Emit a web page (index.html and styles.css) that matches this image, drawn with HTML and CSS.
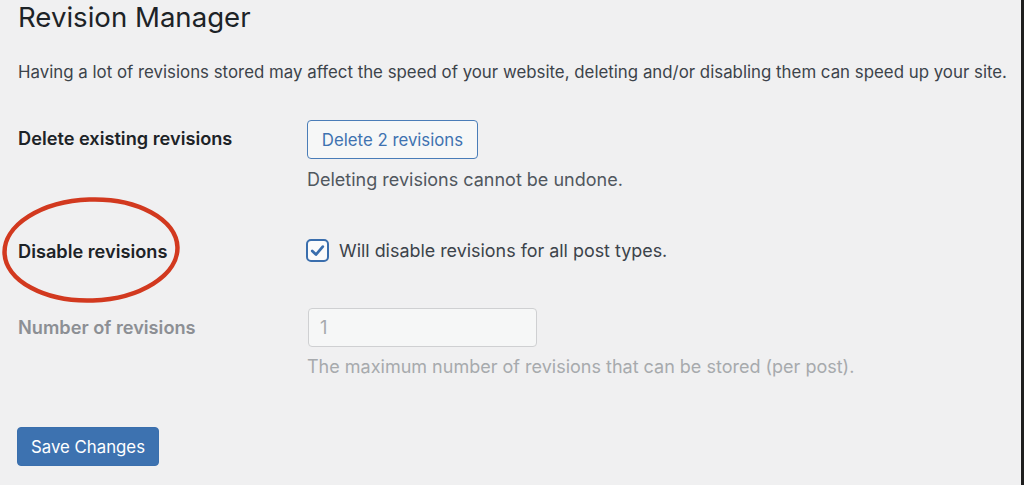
FILE: index.html
```html
<!DOCTYPE html>
<html>
<head>
<meta charset="utf-8">
<link rel="stylesheet" href="styles.css">
</head>
<body>
<div class="page">
  <h1 class="title">Revision Manager</h1>
  <p class="intro">Having a lot of revisions stored may affect the speed of your website, deleting and/or disabling them can speed up your site.</p>
  <div class="form">
    <div class="row row-delete">
      <div class="label">Delete existing revisions</div>
      <div class="field">
        <button class="btn-secondary">Delete 2 revisions</button>
        <p class="desc">Deleting revisions cannot be undone.</p>
      </div>
    </div>
    <div class="row row-disable">
      <div class="label label-circled">Disable revisions
        <svg class="circle" width="184" height="112" viewBox="0 0 184 112"><ellipse cx="92" cy="56" rx="86.5" ry="50.5" fill="none" stroke="#d2391f" stroke-width="4.5" transform="rotate(-2 92 56)"/></svg>
      </div>
      <div class="field check-field">
        <span class="checkbox"><svg width="17" height="17" viewBox="0 0 20 20"><path d="M3.8 10.6 L8.2 14.8 L16.2 5.4" fill="none" stroke="#3a6ead" stroke-width="3.2" stroke-linecap="round" stroke-linejoin="round"/></svg></span>
        <span class="check-label">Will disable revisions for all post types.</span>
      </div>
    </div>
    <div class="row row-number">
      <div class="label label-muted">Number of revisions</div>
      <div class="field">
        <div class="input">1</div>
        <p class="desc desc-muted">The maximum number of revisions that can be stored (per post).</p>
      </div>
    </div>
  </div>
  <button class="btn-primary">Save Changes</button>
</div>
</body>
</html>
```
FILE: styles.css
```css
html, body {
  margin: 0;
  padding: 0;
}
body {
  background: #f0f0f1;
  font-family: Inter, "Liberation Sans", sans-serif;
  color: #3c434a;
  width: 1024px;
  height: 485px;
  overflow: hidden;
  position: relative;
  box-sizing: border-box;
  border-right: 3px solid #1e1e1e;
}
.page {
  padding: 0 0 0 18px;
}
.title {
  margin: 0;
  font-size: 27.6px;
  font-weight: 400;
  color: #1d2327;
  line-height: 34px;
}
.intro {
  margin: 25px 0 0;
  font-size: 16.85px;
  line-height: 26px;
  color: #3c434a;
  white-space: nowrap;
}
.form {
  margin-top: 35px;
}
.row {
  display: grid;
  grid-template-columns: 289px 1fr;
}
.label {
  font-weight: 600;
  font-size: 18.2px;
  color: #1d2327;
  line-height: 26px;
}
.label-circled {
  position: relative;
}
.circle {
  position: absolute;
  left: -19px;
  top: -43.5px;
}
.label-muted {
  color: #8c8f94;
}
.row-delete .label {
  padding-top: 5px;
}
.btn-secondary {
  display: block;
  box-sizing: border-box;
  width: 171px;
  height: 39px;
  border: 1.5px solid #4a7db8;
  border-radius: 4px;
  background: #f6f7f7;
  color: #3e72b0;
  font-family: inherit;
  font-size: 16.8px;
  padding: 0;
  margin: 0;
}
.desc {
  margin: 8px 0 0;
  font-size: 18px;
  line-height: 26px;
  color: #50575e;
}
.desc-muted {
  color: #a7aaad;
  margin-top: 6.5px;
}
.row-disable {
  margin-top: 44.5px;
  align-items: center;
}
.check-field {
  display: flex;
  align-items: center;
  gap: 10px;
}
.checkbox {
  box-sizing: border-box;
  width: 23px;
  height: 23px;
  border: 2.5px solid #3a6ead;
  border-radius: 5px;
  background: #fbfbfb;
  display: flex;
  align-items: center;
  justify-content: center;
  margin-left: -1px;
}
.check-label {
  font-size: 17.9px;
  line-height: 26px;
  color: #3c434a;
}
.row-number {
  margin-top: 44.5px;
}
.row-number .label {
  padding-top: 5.5px;
}
.input {
  box-sizing: border-box;
  width: 229px;
  height: 39px;
  margin-left: 1px;
  border: 1.5px solid #cfd0d2;
  border-radius: 4px;
  background: #f6f7f7;
  color: #a7aaad;
  font-size: 18.2px;
  line-height: 36px;
  padding-left: 11px;
}
.btn-primary {
  display: block;
  margin: 47.5px 0 0 -1px;
  box-sizing: border-box;
  width: 142px;
  height: 39px;
  border: 1px solid #3a6fad;
  border-radius: 4px;
  background: #3d72b0;
  color: #ffffff;
  font-family: inherit;
  font-size: 16.8px;
  padding: 0;
}
```
